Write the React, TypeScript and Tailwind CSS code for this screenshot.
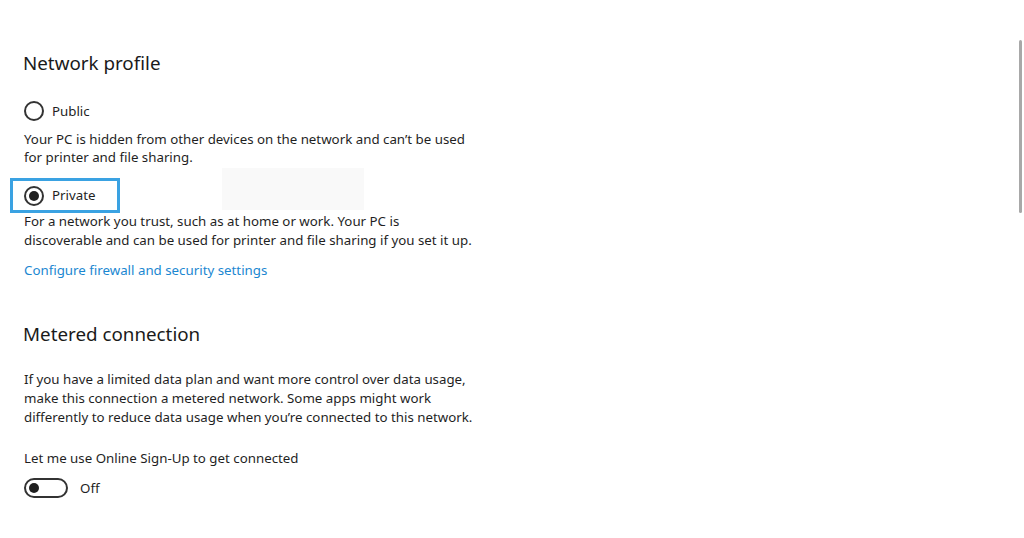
export default function App() {
  const text = "text-[13.3px] text-[#1f1f1f]";
  const body = `${text} leading-[19px]`;

  return (
    <div className="relative w-[1024px] h-[538px] overflow-hidden bg-white font-['Noto_Sans',sans-serif]">
      {/* Scrollbar thumb */}
      <div className="absolute right-[2px] top-[40px] w-[3px] h-[173px] rounded-full bg-[#a8a8a8]" />

      <div className="flex flex-col items-start pl-[23px] pt-[50px]">
        {/* Network profile */}
        <h2 className="text-[18.8px] leading-[26px] text-[#1a1a1a]">Network profile</h2>

        <label className="mt-[24px] flex items-center gap-[8px] h-[22px]">
          <span className="ml-[1px] w-[20px] h-[20px] rounded-full border-2 border-[#333]" />
          <span className={body}>Public</span>
        </label>
        <p className={`mt-[8px] pl-[1px] ${text} leading-[18px]`}>
          Your PC is hidden from other devices on the network and can’t be used
          <br />
          for printer and file sharing.
        </p>

        <div className="mt-[12px] -ml-[13px] flex items-start">
          <div className="w-[110px] h-[35px] border-[3px] border-[#3aa2e2] flex items-center gap-[8px] pl-[11px]">
            <span className="w-[20px] h-[20px] rounded-full border-2 border-[#333] flex items-center justify-center">
              <span className="w-[10px] h-[10px] rounded-full bg-[#1f1f1f]" />
            </span>
            <span className={body}>Private</span>
          </div>
          <div className="ml-[102px] -mt-[10px] w-[142px] h-[42px] bg-[#f9f9f9]" />
        </div>
        <p className={`-mt-[1px] pl-[1px] ${body}`}>
          For a network you trust, such as at home or work. Your PC is
          <br />
          discoverable and can be used for printer and file sharing if you set it up.
        </p>

        <a className="mt-[11px] pl-[1px] text-[13.3px] leading-[19px] text-[#1b87d1]">
          Configure firewall and security settings
        </a>

        {/* Metered connection */}
        <h2 className="mt-[41px] text-[18.8px] leading-[26px] text-[#1a1a1a]">Metered connection</h2>

        <p className={`mt-[23px] pl-[1px] ${body}`}>
          If you have a limited data plan and want more control over data usage,
          <br />
          make this connection a metered network. Some apps might work
          <br />
          differently to reduce data usage when you’re connected to this network.
        </p>

        <p className={`mt-[22px] pl-[1px] ${body}`}>Let me use Online Sign-Up to get connected</p>

        <div className="mt-[10px] pl-[1px] flex items-center gap-[12px]">
          <span className="w-[44px] h-[20px] rounded-full border-2 border-[#333] flex items-center pl-[3px]">
            <span className="w-[10px] h-[10px] rounded-full bg-[#1f1f1f]" />
          </span>
          <span className={body}>Off</span>
        </div>
      </div>
    </div>
  );
}
